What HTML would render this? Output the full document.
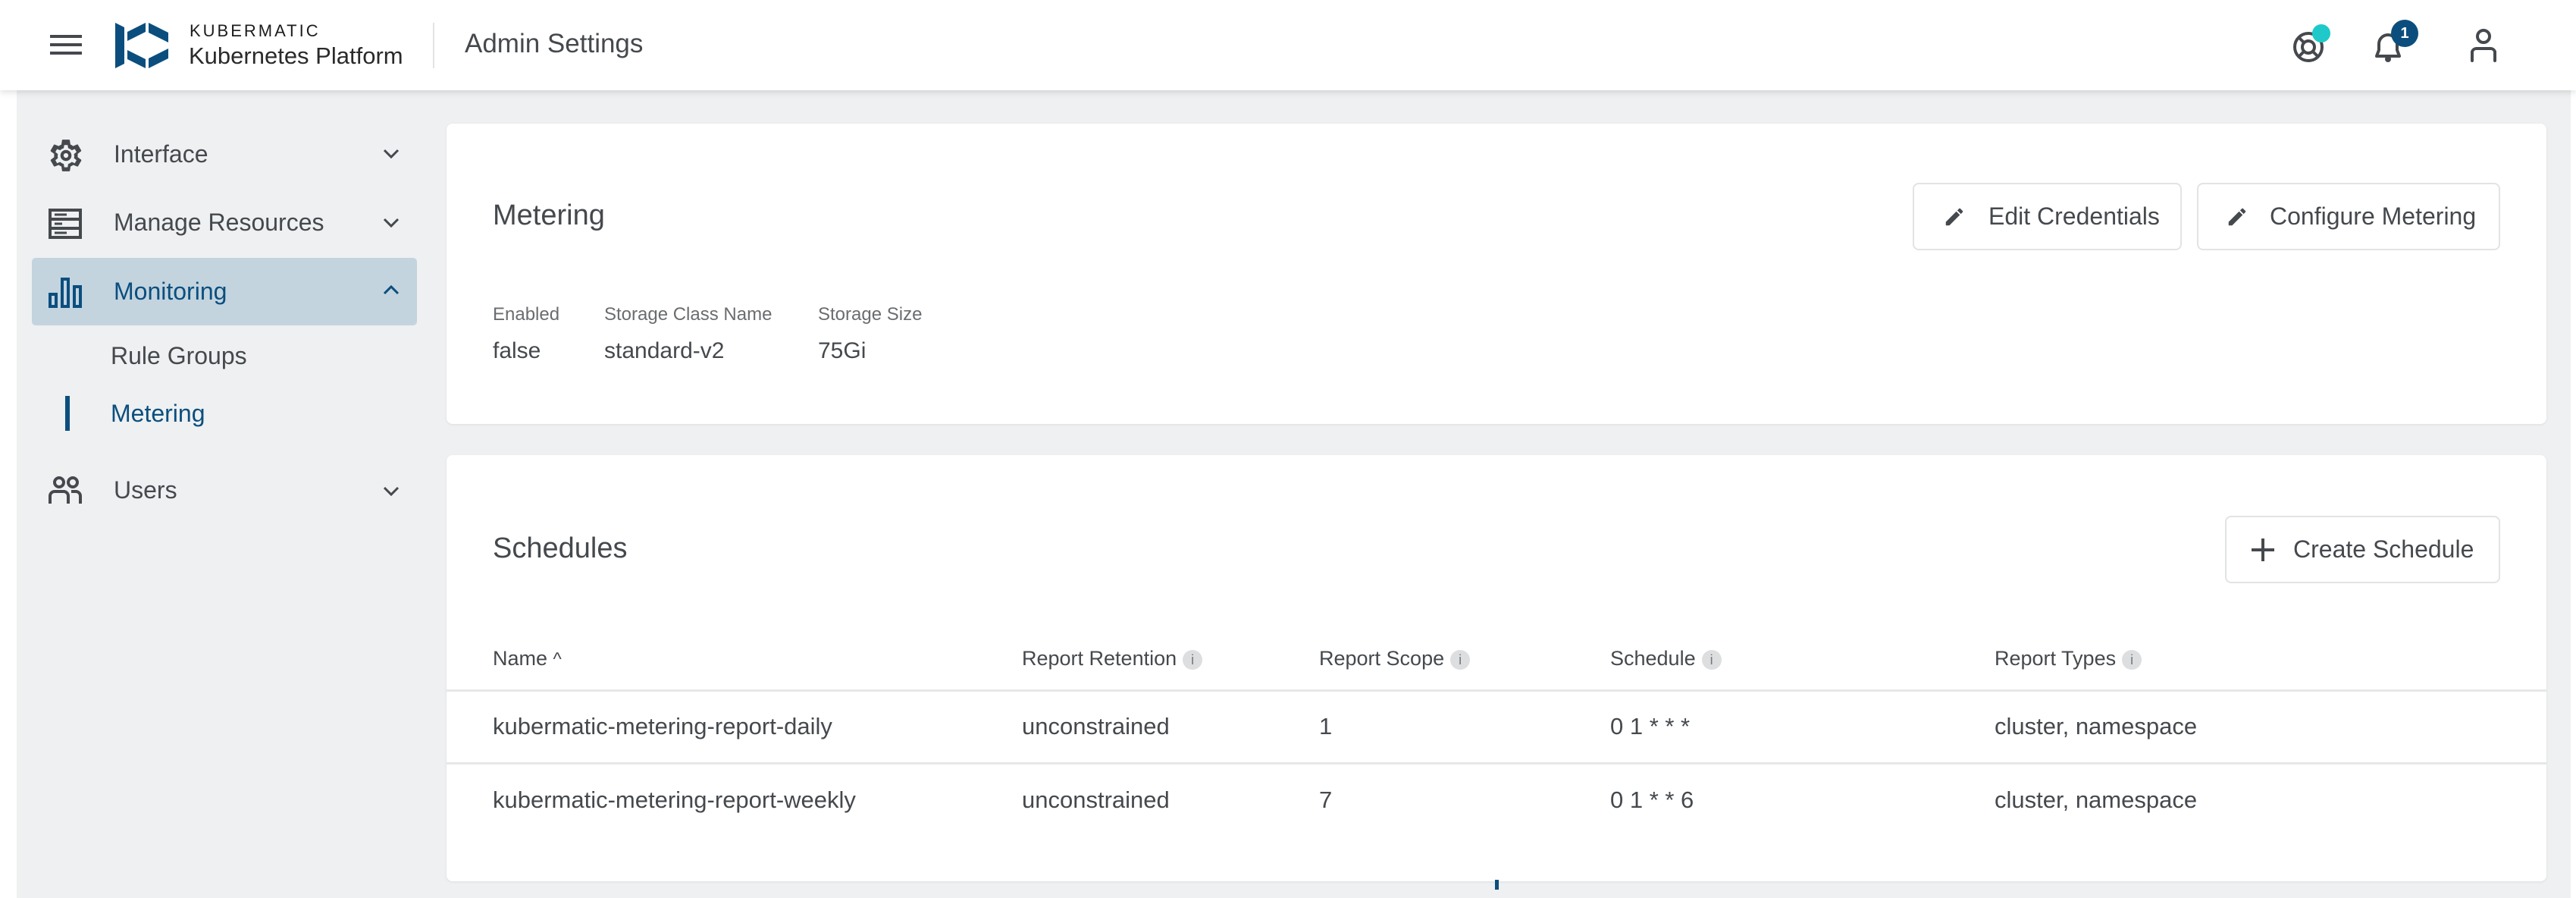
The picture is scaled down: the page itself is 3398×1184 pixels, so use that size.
<!DOCTYPE html>
<html><head><meta charset="utf-8"><style>
*{margin:0;padding:0;box-sizing:border-box}
body{width:3398px;height:1184px;background:#fff;font-family:"Liberation Sans",Arial,sans-serif;color:#45494d;position:relative;overflow:hidden}
.a{position:absolute;white-space:nowrap}
.hdr{left:0;top:0;width:3398px;height:119px;background:#fff;box-shadow:0 3px 8px rgba(0,0,0,.12);z-index:2}
.main{left:22px;top:119px;width:3369px;height:1065px;background:#eef0f1}
.card{background:#fff;border-radius:8px;box-shadow:0 1px 3px rgba(0,0,0,.08)}
.nav{font-size:32px;color:#45494d}
.btn{border:2px solid #e2e3e4;border-radius:8px;background:#fff;font-size:32px;color:#45494d;display:flex;align-items:center}
.th{font-size:27px;color:#45494d}
.cell{font-size:31px;color:#45494d}
.info{display:inline-block;width:26px;height:26px;border-radius:13px;background:#dcdee0;color:#777;font-size:18px;text-align:center;line-height:26px;vertical-align:middle;margin-left:8px}
.line{left:589px;width:2770px;height:3px;background:#e6e7e8}
</style></head><body>
<div class="a hdr">
  <svg class="a" style="left:66px;top:44px" width="42" height="30"><rect x="0" y="2" width="42" height="4" fill="#45494d"/><rect x="0" y="13" width="42" height="4" fill="#45494d"/><rect x="0" y="24" width="42" height="4" fill="#45494d"/></svg>
  <svg class="a" style="left:152px;top:30px" width="70" height="60" viewBox="0 0 70 60"><polygon points="0,0 12,6 12,54 0,60" fill="#0b4e7e"/><polygon points="16,24 40,12 40,0 16,12" fill="#0b4e7e"/><polygon points="44,0 70,13 70,26 44,13" fill="#0b4e7e"/><polygon points="16,36 40,48 40,60 16,48" fill="#0b4e7e"/><polygon points="44,60 70,47 70,34 44,47" fill="#0b4e7e"/></svg>
  <div class="a" style="left:250px;top:28px;font-size:22px;letter-spacing:3px;color:#1c1c1c">KUBERMATIC</div>
  <div class="a" style="left:249px;top:56px;font-size:31px;color:#2a2a2a">Kubernetes Platform</div>
  <div class="a" style="left:571px;top:30px;width:2px;height:60px;background:#e3e3e3"></div>
  <div class="a" style="left:613px;top:38px;font-size:35px;color:#45494d">Admin Settings</div>
  <svg class="a" style="left:3023px;top:37px" width="48" height="48" viewBox="0 0 48 48"><circle cx="22" cy="25" r="18" fill="none" stroke="#45494d" stroke-width="4"/><circle cx="22" cy="25" r="8" fill="none" stroke="#45494d" stroke-width="4"/><path d="M10 13l6 6M34 37l-6-6M10 37l6-6" stroke="#45494d" stroke-width="4"/></svg>
  <div class="a" style="left:3050px;top:32px;width:24px;height:24px;border-radius:12px;background:#1fc9c9"></div>
  <svg class="a" style="left:3130px;top:36px" width="40" height="46" viewBox="0 0 40 46"><path d="M5 38 L8 30 V22 A12 12 0 0 1 32 22 V30 L35 38 Z" fill="none" stroke="#45494d" stroke-width="4" stroke-linejoin="round"/><circle cx="20" cy="42" r="4" fill="#45494d"/></svg>
  <div class="a" style="left:3154px;top:26px;width:36px;height:36px;border-radius:18px;background:#0b4e7e;color:#fff;font-size:20px;font-weight:bold;text-align:center;line-height:36px">1</div>
  <svg class="a" style="left:3258px;top:38px" width="36" height="44" viewBox="0 0 36 44"><circle cx="18" cy="10" r="8" fill="none" stroke="#45494d" stroke-width="4"/><path d="M3 42 V30 A6 6 0 0 1 9 26 H27 A6 6 0 0 1 33 30 V42" fill="none" stroke="#45494d" stroke-width="4" stroke-linecap="round"/></svg>
</div>
<div class="a main"></div>
<svg class="a" style="left:62px;top:180px" width="50" height="50" viewBox="0 0 24 24"><path fill="#45494d" d="M19.4 13c.04-.32.06-.66.06-1s-.02-.68-.06-1l2.1-1.65a.5.5 0 0 0 .12-.64l-2-3.46a.5.5 0 0 0-.6-.22l-2.5 1a7.3 7.3 0 0 0-1.7-1l-.38-2.650A.5.5 0 0 0 14 2h-4a.5.5 0 0 0-.5.42l-.38 2.65a7.3 7.300 0 0 0-1.7 1l-2.5-1a.5.5 0 0 0-.6.22l-2 3.46a.5.5 0 0 0 .12.64L4.56 11c-.04.32-.06.66-.06 1s.02.68.06 1l-2.1 1.65a.5.5 0 0 0-.12.64l2 3.46c.12.22.39.3.6.22l2.5-1c.52.4 1.08.73 1.7 1l.38 2.65c.04.24.25.42.5.42h4c.25 0 .46-.18.5-.42l.38-2.65a7.3 7.3 0 0 0 1.7-1l2.5 1c.23.08.48 0 .6-.22l2-3.46a.5.5 0 0 0-.12-.64zM12 19.5l-1.1-.1-.3-2a5.8 5.8 0 0 1-2.3-1.3l-1.9.8-1.1-1.9 1.6-1.3a5.6 5.6 0 0 1 0-2.6L5.3 9.8l1.1-1.9 1.9.8a5.8 5.8 0 0 1 2.3-1.3l.3-2h2.2l.3 2c.86.26 1.64.7 2.3 1.3l1.9-.8 1.100 1.9-1.6 1.3a5.6 5.6 0 0 1 0 2.6l1.6 1.3-1.1 1.9-1.9-.8a5.8 5.8 0 0 1-2.3 1.3l-.3 2zM12 8.5a3.5 3.5 0 1 0 0 7 3.5 3.5 0 0 0 0-7zm0 5a1.5 1.5 0 1 1 0-3 1.5 1.5 0 0 1 0 3z"/></svg>
<div class="a nav" style="left:150px;top:185px">Interface</div>
<svg class="a" style="left:504px;top:195px" width="24" height="16"><path d="M3 3l9 9 9-9" fill="none" stroke="#45494d" stroke-width="3"/></svg>
<svg class="a" style="left:64px;top:275px" width="44" height="40" viewBox="0 0 44 40"><rect x="2" y="2" width="40" height="36" fill="none" stroke="#45494d" stroke-width="4"/><path d="M2 14H42M2 26H42" stroke="#45494d" stroke-width="4"/><path d="M8 8H24M8 20H18M8 32H24" stroke="#45494d" stroke-width="3"/></svg>
<div class="a nav" style="left:150px;top:275px">Manage Resources</div>
<svg class="a" style="left:504px;top:286px" width="24" height="16"><path d="M3 3l9 9 9-9" fill="none" stroke="#45494d" stroke-width="3"/></svg>
<div class="a" style="left:42px;top:340px;width:508px;height:89px;background:#c3d4df;border-radius:5px"></div>
<svg class="a" style="left:64px;top:366px" width="44" height="40" viewBox="0 0 44 40"><rect x="2" y="22" width="8" height="16" fill="none" stroke="#0b4e7e" stroke-width="4"/><rect x="18" y="2" width="8" height="36" fill="none" stroke="#0b4e7e" stroke-width="4"/><rect x="34" y="12" width="8" height="26" fill="none" stroke="#0b4e7e" stroke-width="4"/></svg>
<div class="a nav" style="left:150px;top:366px;color:#0b4e7e">Monitoring</div>
<svg class="a" style="left:504px;top:374px" width="24" height="16"><path d="M3 13l9-9 9 9" fill="none" stroke="#0b4e7e" stroke-width="3"/></svg>
<div class="a nav" style="left:146px;top:451px">Rule Groups</div>
<div class="a" style="left:86px;top:522px;width:6px;height:46px;background:#0b4e7e"></div>
<div class="a nav" style="left:146px;top:527px;color:#0b4e7e">Metering</div>
<svg class="a" style="left:64px;top:628px" width="44" height="38" viewBox="0 0 44 38"><circle cx="14" cy="8" r="6" fill="none" stroke="#45494d" stroke-width="4"/><circle cx="32" cy="8" r="6" fill="none" stroke="#45494d" stroke-width="4"/><path d="M2 36V26a6 6 0 0 1 6-6h12a6 6 0 0 1 6 6v10M30 20h6a6 6 0 0 1 6 6v10" fill="none" stroke="#45494d" stroke-width="4"/></svg>
<div class="a nav" style="left:150px;top:628px">Users</div>
<svg class="a" style="left:504px;top:640px" width="24" height="16"><path d="M3 3l9 9 9-9" fill="none" stroke="#45494d" stroke-width="3"/></svg>
<div class="a card" style="left:589px;top:163px;width:2770px;height:396px"></div>
<div class="a" style="left:650px;top:263px;font-size:38px;color:#45494d">Metering</div>
<div class="a btn" style="left:2523px;top:241px;width:355px;height:89px"><svg style="margin-left:38px;margin-right:30px" width="30" height="30" viewBox="0 0 24 24"><path fill="#45494d" d="M3 17.25V21h3.75L17.8 9.94l-3.75-3.75zM20.7 7.04a1 1 0 0 0 0-1.410l-2.34-2.34a1 1 0 0 0-1.41 0l-1.83 1.83 3.75 3.75z"/></svg>Edit Credentials</div>
<div class="a btn" style="left:2898px;top:241px;width:400px;height:89px"><svg style="margin-left:36px;margin-right:28px" width="30" height="30" viewBox="0 0 24 24"><path fill="#45494d" d="M3 17.25V21h3.75L17.8 9.94l-3.75-3.75zM20.7 7.04a1 1 0 0 0 0-1.41l-2.34-2.34a1 1 0 0 0-1.41 0l-1.83 1.830 3.75 3.75z"/></svg>Configure Metering</div>
<div class="a" style="left:650px;top:401px;font-size:24px;color:#6a6d70">Enabled</div>
<div class="a" style="left:797px;top:401px;font-size:24px;color:#6a6d70">Storage Class Name</div>
<div class="a" style="left:1079px;top:401px;font-size:24px;color:#6a6d70">Storage Size</div>
<div class="a" style="left:650px;top:446px;font-size:30px">false</div>
<div class="a" style="left:797px;top:446px;font-size:30px">standard-v2</div>
<div class="a" style="left:1079px;top:446px;font-size:30px">75Gi</div>
<div class="a card" style="left:589px;top:600px;width:2770px;height:562px"></div>
<div class="a" style="left:650px;top:702px;font-size:38px">Schedules</div>
<div class="a btn" style="left:2935px;top:680px;width:363px;height:89px"><svg style="margin-left:30px;margin-right:22px" width="36" height="36" viewBox="0 0 36 36"><path d="M18 3V33M3 18H33" stroke="#45494d" stroke-width="4"/></svg>Create Schedule</div>
<div class="a th" style="left:650px;top:853px">Name <span style="font-size:24px">^</span></div>
<div class="a th" style="left:1348px;top:853px">Report Retention<span class="info">i</span></div>
<div class="a th" style="left:1740px;top:853px">Report Scope<span class="info">i</span></div>
<div class="a th" style="left:2124px;top:853px">Schedule<span class="info">i</span></div>
<div class="a th" style="left:2631px;top:853px">Report Types<span class="info">i</span></div>
<div class="a line" style="top:909px"></div>
<div class="a cell" style="left:650px;top:940px">kubermatic-metering-report-daily</div>
<div class="a cell" style="left:1348px;top:940px">unconstrained</div>
<div class="a cell" style="left:1740px;top:940px">1</div>
<div class="a cell" style="left:2124px;top:940px">0 1 * * *</div>
<div class="a cell" style="left:2631px;top:940px">cluster, namespace</div>
<div class="a line" style="top:1005px"></div>
<div class="a cell" style="left:650px;top:1037px">kubermatic-metering-report-weekly</div>
<div class="a cell" style="left:1348px;top:1037px">unconstrained</div>
<div class="a cell" style="left:1740px;top:1037px">7</div>
<div class="a cell" style="left:2124px;top:1037px">0 1 * * 6</div>
<div class="a cell" style="left:2631px;top:1037px">cluster, namespace</div>
<div class="a" style="left:1972px;top:1160px;width:5px;height:13px;background:#0b4e7e"></div>
</body></html>
